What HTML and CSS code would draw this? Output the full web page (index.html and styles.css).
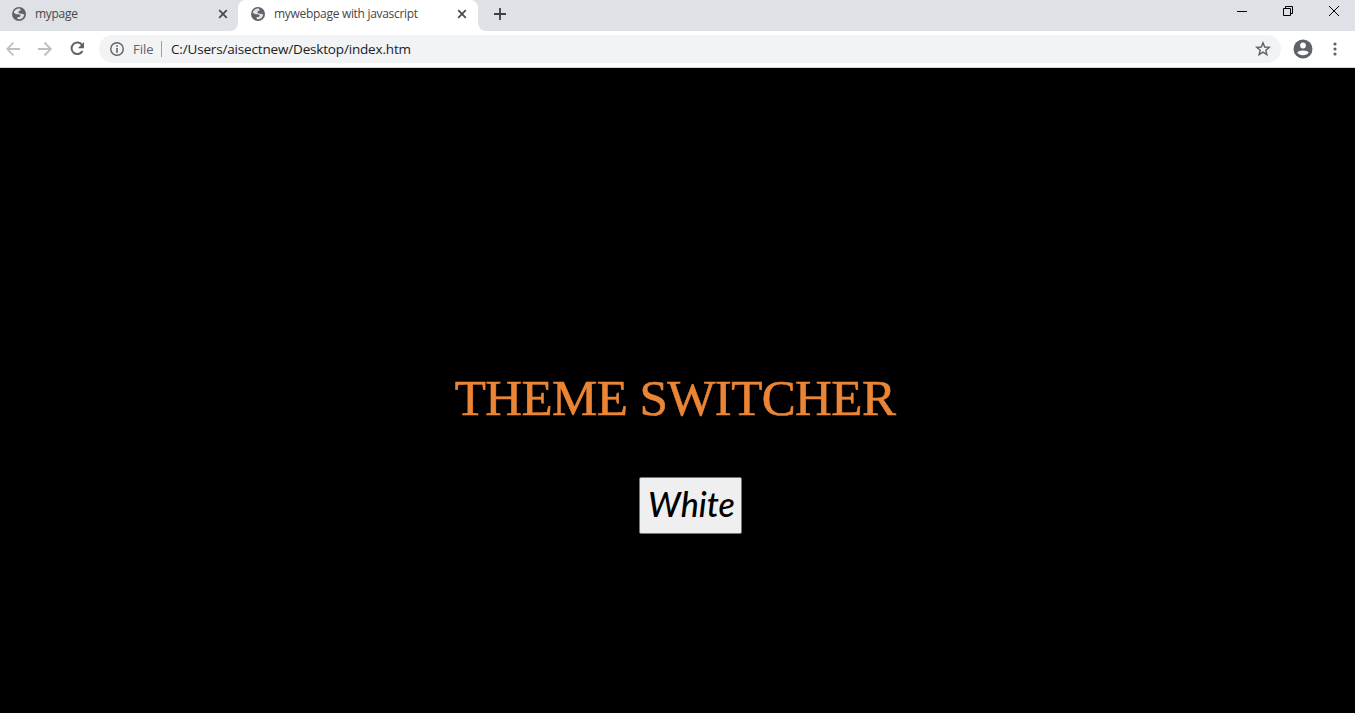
FILE: index.html
```html
<!DOCTYPE html>
<html lang="en">
<head>
<meta charset="utf-8">
<title>mywebpage with javascript</title>
<link rel="stylesheet" href="styles.css">
</head>
<body>
<svg class="defs" aria-hidden="true">
  <symbol id="globe" viewBox="0 0 14 14"><circle cx="7" cy="7" r="7" fill="#5f6368"/><path d="M8 1.6C5 1.2 2.3 3 1.7 5.8L4.2 7.2H7.1L8.8 8.8 7.5 10H5.6V12.1C8.8 12.9 11.8 10.8 12.3 7.8L10.5 6.8H8L6.2 5.3 7.3 3.8H8.8Z" fill="#dee1e6"/></symbol>
  <symbol id="close" viewBox="0 0 10 10"><path d="M1.2 1.2 8.8 8.8M8.8 1.2 1.2 8.8" stroke="#45484c" stroke-width="1.7"/></symbol>
</svg>
<header class="tabs">
  <div class="tab"><svg class="globe"><use href="#globe"/></svg><span class="title">mypage</span><svg class="close"><use href="#close"/></svg></div>
  <div class="tab active"><svg class="globe"><use href="#globe"/></svg><span class="title">mywebpage with javascript</span><svg class="close"><use href="#close"/></svg></div>
  <div class="rest">
    <svg class="plus" viewBox="0 0 12 12"><path d="M6 0V12M0 6H12" stroke="#3c4043" stroke-width="1.8"/></svg>
    <svg class="window-controls" viewBox="0 0 104 14" fill="none" stroke="#000"><path d="M1 7.500H11M47.500 4.500H54.500V11.500H47.500ZM49.500 4V2.500H56.500V9.500H55M93 2 103 12M103 2 93 12"/></svg>
  </div>
</header>
<nav class="toolbar">
  <svg class="nav-icons" viewBox="0 0 80 16" fill="none" stroke="#bdbec0" stroke-width="1.8"><path d="M14 8H1.500M7.500 1.500 1.300 8 7.500 14.500M32 8H45M38.500 1.500 44.800 8 38.500 14.500"/><path d="M76.300 4.200A5.800 5.800 0 1 0 76.500 10" stroke="#5f6368" stroke-width="2"/><path d="M78 1V7.200H71.800Z" fill="#5f6368" stroke="none"/></svg>
  <div class="address">
    <svg class="info" viewBox="0 0 14 14"><circle cx="7" cy="7" r="6.250" fill="none" stroke="#5f6368" stroke-width="1.4"/><path d="M7 3.200V4.800M7 6V10.700" stroke="#5f6368" stroke-width="1.6"/></svg>
    <span class="scheme">File</span><span class="divider"></span><span class="url">C:/Users/aisectnew/Desktop/index.htm</span>
    <svg class="star" viewBox="0 0 16 16"><path d="M8 1.800 9.700 6 14.300 6.300 10.800 9.200 11.900 13.700 8 11.200 4.100 13.700 5.200 9.200 1.700 6.300 6.300 6Z" fill="none" stroke="#5f6368" stroke-width="1.400"/></svg>
  </div>
  <svg class="profile" viewBox="0 0 20 20"><circle cx="10" cy="10" r="9.500" fill="#5f6368"/><circle cx="10" cy="6.500" r="2.900" fill="#fff"/><path d="M4.300 13.500C5.500 10.700 14.500 10.700 15.700 13.500 13.500 17.200 6.500 17.200 4.300 13.500Z" fill="#fff"/></svg>
  <svg class="menu" viewBox="0 0 4 14" fill="#5f6368"><circle cx="2" cy="2" r="1.600"/><circle cx="2" cy="7" r="1.600"/><circle cx="2" cy="12" r="1.600"/></svg>
</nav>
<main class="page">
  <h1 class="heading">THEME SWITCHER</h1>
  <button class="switch">White</button>
</main>
</body>
</html>
```
FILE: styles.css
```css
* { box-sizing: border-box; }
body { margin: 0; height: 713px; overflow: hidden; background: #000; font-family: "Open Sans", sans-serif; }
svg { display: block; flex: none; }
.defs { display: none; }
.tabs { display: flex; height: 31px; background: #fff; }
.tab { display: flex; align-items: center; width: 238px; height: 31px; padding: 0 10px 3px 12px; background: #dee1e6; border-bottom-right-radius: 8px; }
.active { width: 240px; padding: 0 11px 3px 13px; background: radial-gradient(circle at 8px 8px, #fff 7.5px, #dee1e6 8.5px) left top / 8px 8px no-repeat, radial-gradient(circle at 0 8px, #fff 7.5px, #dee1e6 8.5px) right top / 8px 8px no-repeat, #fff; }
.globe { width: 14px; height: 14px; margin-right: 9px; }
.close { width: 10px; height: 10px; margin-left: auto; }
.title { font-size: 12px; line-height: 18px; letter-spacing: -0.3px; color: #45474a; white-space: nowrap; }
.rest { display: flex; flex: 1; justify-content: space-between; padding: 8px 15px 0 16px; background: #dee1e6; border-bottom-left-radius: 8px; }
.plus { width: 12px; height: 12px; }
.window-controls { width: 104px; height: 14px; margin-top: -4px; }
.toolbar { display: flex; align-items: center; height: 37px; padding: 0 18px 1px 6px; background: #fff; border-bottom: 1px solid #d4d6d9; }
.nav-icons { width: 80px; height: 16px; margin-right: 13px; }
.address { display: flex; flex: 1; align-items: center; height: 28px; padding: 0 10px 0 11px; border-radius: 14px; background: #f1f3f4; font-size: 14px; line-height: 20px; }
.info { width: 14px; height: 14px; margin-right: 9px; }
.scheme { width: 28px; font-size: 13px; color: #5f6368; }
.divider { width: 1px; height: 16px; margin-right: 9px; background: #9aa0a6; }
.url { color: #202124; font-size: 13.5px; letter-spacing: -0.17px; white-space: nowrap; }
.star { width: 16px; height: 16px; margin-left: auto; }
.profile { width: 20px; height: 20px; margin: 0 20px 0 12px; }
.menu { width: 4px; height: 14px; }
.page { display: flex; flex-direction: column; align-items: center; height: 645px; padding-top: 300px; background: #000; }
.heading { margin: 0 5px 49px 0; height: 60px; font: 400 51px/60px "Liberation Serif", serif; letter-spacing: -0.6px; -webkit-text-stroke: 0.6px #eb8535; color: #eb8535; white-space: nowrap; }
.switch { width: 103px; height: 57px; margin-left: 26px; padding: 0 0 4px 2px; border: 1px solid #767676; border-radius: 2px; background: #efefef; font: italic 500 34px/50px Lato, sans-serif; color: #000; }
```
